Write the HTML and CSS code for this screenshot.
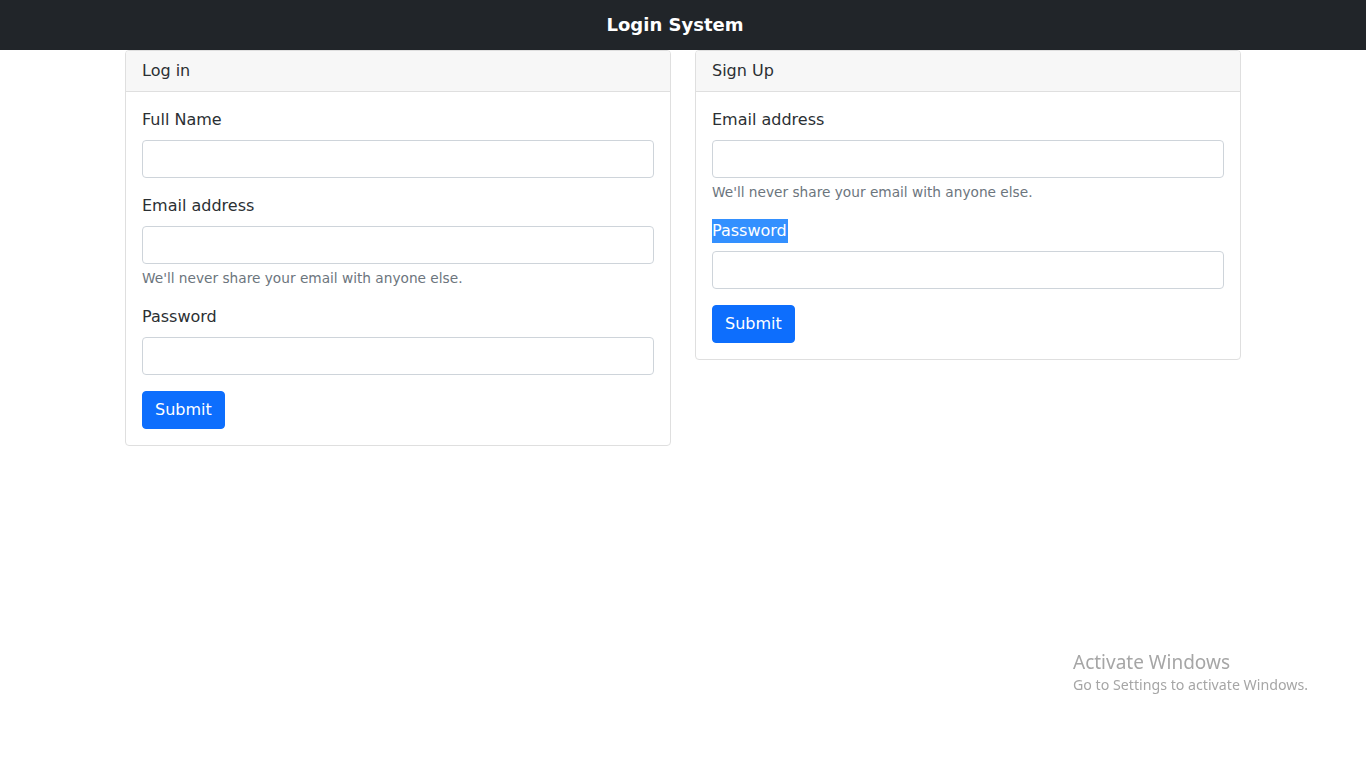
FILE: index.html
```html
<!DOCTYPE html>
<html lang="en">
<head>
<meta charset="utf-8">
<title>Login System</title>
<link rel="stylesheet" href="styles.css">
</head>
<body>
<nav class="navbar">
  <span class="brand">Login System</span>
</nav>
<main class="container">
  <div class="row">
    <div class="col">
      <section class="card">
        <div class="card-header">Log in</div>
        <form class="card-body">
          <div class="field">
            <label class="form-label">Full Name</label>
            <input class="form-control" type="text">
          </div>
          <div class="field">
            <label class="form-label">Email address</label>
            <input class="form-control" type="email">
            <div class="form-text">We'll never share your email with anyone else.</div>
          </div>
          <div class="field">
            <label class="form-label">Password</label>
            <input class="form-control" type="password">
          </div>
          <button class="btn" type="button">Submit</button>
        </form>
      </section>
    </div>
    <div class="col">
      <section class="card">
        <div class="card-header">Sign Up</div>
        <form class="card-body">
          <div class="field">
            <label class="form-label">Email address</label>
            <input class="form-control" type="email">
            <div class="form-text">We'll never share your email with anyone else.</div>
          </div>
          <div class="field">
            <label class="form-label"><span class="selected">Password</span></label>
            <input class="form-control" type="password">
          </div>
          <button class="btn" type="button">Submit</button>
        </form>
      </section>
    </div>
  </div>
</main>
<div class="watermark">
  <div class="wm-title">Activate Windows</div>
  <div class="wm-sub">Go to Settings to activate Windows.</div>
</div>
</body>
</html>
```

FILE: styles.css
```css
* { box-sizing: border-box; }
html, body { margin: 0; padding: 0; }
body {
  font-family: "DejaVu Sans", "Noto Sans", sans-serif;
  font-size: 16px;
  line-height: 24px;
  color: #212529;
  background: #fff;
}
.navbar {
  height: 50px;
  background: #212529;
  display: flex;
  align-items: center;
  justify-content: center;
  padding-right: 16px;
}
.brand {
  color: #fff;
  font-size: 18px;
  font-weight: 600;
}
.container {
  width: 1140px;
  margin: 0 auto;
  padding: 0 12px;
}
.row {
  display: flex;
  gap: 24px;
  align-items: flex-start;
}
.col { flex: 1; }
.card {
  border: 1px solid #dfdfdf;
  border-radius: 4px;
  background: #fff;
  overflow: hidden;
}
.card-header {
  height: 41px;
  padding: 8px 16px;
  background: #f7f7f7;
  border-bottom: 1px solid #dfdfdf;
  line-height: 24px;
  color: #2b2f33;
}
.card-body {
  padding: 16px 16px;
  margin: 0;
}
.field { margin-bottom: 16px; }
.form-label {
  display: block;
  margin-bottom: 8px;
  height: 24px;
  color: #2b2f33;
}
.selected {
  background: #3390ff;
  color: #fff;
  display: inline-block;
  padding-right: 1px;
}
.form-control {
  display: block;
  width: 100%;
  height: 38px;
  border: 1px solid #ced4da;
  border-radius: 4px;
  background: #fff;
  padding: 6px 12px;
  font: inherit;
  margin: 0;
}
.form-text {
  margin-top: 4px;
  font-size: 13.7px;
  line-height: 21px;
  color: #6c757d;
}
.btn {
  display: block;
  height: 38px;
  padding: 0 12px;
  background: #0d6efd;
  border: 1px solid #0d6efd;
  border-radius: 4px;
  color: #fff;
  font: inherit;
  line-height: 36px;
  margin: 0;
}
.watermark {
  position: fixed;
  left: 1073px;
  top: 650px;
  font-family: "Noto Sans", "Open Sans", sans-serif;
  color: #a6a6a6;
}
.wm-title { font-size: 19px; line-height: 24px; }
.wm-sub { font-size: 14.2px; line-height: 22px; }
```
